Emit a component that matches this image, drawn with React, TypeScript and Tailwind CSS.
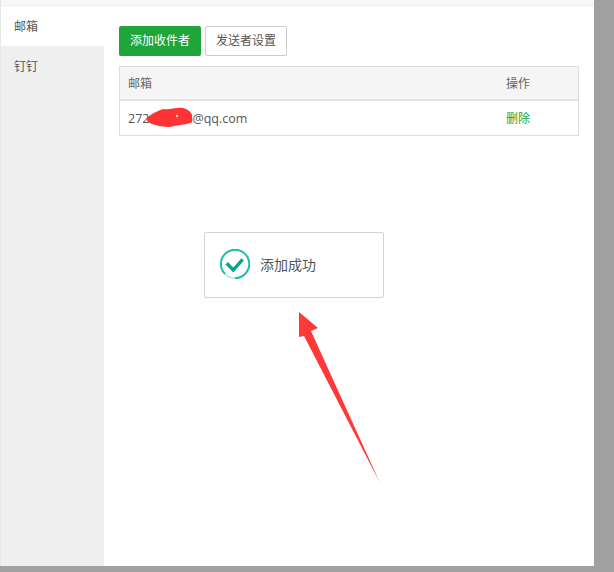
export default function App() {
  const font = { fontFamily: '"Open Sans", "Noto Sans CJK SC", sans-serif' };
  return (
    <div style={font} className="relative h-[572px] w-[614px] overflow-hidden bg-[#a0a0a0] text-[12px] text-[#555]">
      <div className="flex h-[566px] w-[594px] flex-col border-l border-[#e6e6e6] bg-white">
        <div className="h-[6px] shrink-0 border-b border-[#eeeeee] bg-[#f7f7f7]" />
        <div className="flex min-h-0 flex-1">
          <div className="w-[103px] shrink-0 bg-[#efefef]">
            <div className="flex h-[40px] items-center bg-white pl-[13px] pt-[1px]">邮箱</div>
            <div className="flex h-[40px] items-center pl-[13px] pt-[1px]">钉钉</div>
          </div>
          <div className="w-[475px] pl-[15px] pt-[20px]">
            <div className="flex gap-[4px]">
              <button className="h-[30px] w-[82px] rounded-[2px] bg-[#20a53a] text-[12px] text-white">添加收件者</button>
              <button className="h-[30px] w-[82px] rounded-[2px] border border-[#cccccc] bg-white text-[12px] text-[#555]">发送者设置</button>
            </div>
            <div className="mt-[10px] w-[460px] border border-[#dddddd]">
              <div className="flex h-[34px] items-center justify-between border-b-2 border-[#e3e3e3] bg-[#f5f5f5] pl-[8px] pt-[1px]">
                <span className="text-[#666]">邮箱</span>
                <span className="w-[72px] text-[#666]">操作</span>
              </div>
              <div className="flex h-[34px] items-center justify-between pl-[8px] pt-[2px]">
                <span className="text-[12.5px]">272<span className="inline-block w-[43px]" />@qq.com</span>
                <span className="w-[72px] text-[#20a53a]">删除</span>
              </div>
            </div>
          </div>
        </div>
      </div>

      {/* red scribble over the address */}
      <svg className="absolute left-[144px] top-[105px]" width="52" height="24" viewBox="0 0 52 24">
        <path d="M3 13 C8 8 14 6 19 4 C26 5 32 2 39 3 C44 4 49 8 48 12 C49 16 48 18 46 18 C40 20 33 20 26 22 C20 22 13 21 8 19 C5 18 2 16 3 13 Z" fill="#ff3333" />
        <circle cx="33" cy="11" r="1.2" fill="#ffd0d0" />
      </svg>

      {/* toast */}
      <div className="absolute left-[204px] top-[232px] flex h-[66px] w-[180px] items-center rounded-[2px] border border-[#d2d2d2] bg-white pb-[2px] pl-[15px] text-[14px] text-[#555]">
        <svg width="30" height="30" viewBox="0 0 30 30" className="shrink-0">
          <path d="M5 25 A14.2 14.2 0 1 1 15 29.2" fill="none" stroke="#17bfa4" strokeWidth="2" />
          <path d="M5 25 A14.2 14.2 0 0 0 15 29.2" fill="none" stroke="#a5e4da" strokeWidth="1.2" />
          <path d="M6.7 14.3 L13.3 21 L22.7 10.3" fill="none" stroke="#0fa38d" strokeWidth="3.4" />
        </svg>
        <span className="ml-[10px]">添加成功</span>
      </div>

      {/* annotation arrow */}
      <svg className="absolute left-[295px] top-[308px]" width="90" height="178" viewBox="0 0 90 178">
        <path d="M4 4 L23 20 L16 23 L85 175 L9 28 L4 29 Z" fill="#ff3838" />
      </svg>
    </div>
  );
}
